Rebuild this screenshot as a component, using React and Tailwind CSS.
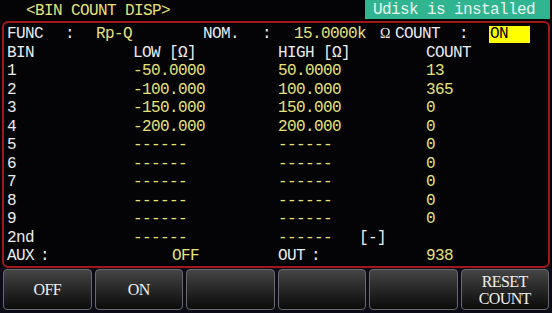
export default function App() {
  const mono = { fontFamily: '"Liberation Mono", "DejaVu Sans Mono", monospace' };
  const Y = "text-[#e6e27a]";
  const W = "text-[#ececec]";
  const rows = [
    ["1", "-50.0000", "50.0000", "13"],
    ["2", "-100.000", "100.000", "365"],
    ["3", "-150.000", "150.000", "0"],
    ["4", "-200.000", "200.000", "0"],
    ["5", "------", "------", "0"],
    ["6", "------", "------", "0"],
    ["7", "------", "------", "0"],
    ["8", "------", "------", "0"],
    ["9", "------", "------", "0"],
  ];
  const Row = ({ children }) => (
    <div className="flex h-[18.5px] items-center whitespace-pre">{children}</div>
  );
  const buttons = ["OFF", "ON", "", "", "", "RESET\nCOUNT"];
  return (
    <div
      className="w-[552px] h-[313px] bg-[#040407] overflow-hidden text-[16px] tracking-[-0.6px] leading-none"
      style={mono}
    >
      {/* header */}
      <div className="flex h-[21px] items-start">
        <div className={`pl-[26px] pt-[3px] ${Y} whitespace-pre`}>{"<BIN COUNT DISP>"}</div>
        <div className="ml-auto mr-[2px] w-[185px] h-[19px] bg-[#31b591] text-[#e8f6f0] flex items-center pl-[8px] whitespace-pre">
          Udisk is installed
        </div>
      </div>
      {/* panel */}
      <div className="mx-[2px] h-[247px] border-2 border-[#a0181c] rounded-[6px] pl-[3px] pt-[2px]">
        <Row>
          <span className={`w-[58px] ${W}`}>FUNC</span>
          <span className={`w-[31px] ${W}`}>:</span>
          <span className={`w-[107px] ${Y}`}>Rp-Q</span>
          <span className={`w-[59px] ${W}`}>NOM.</span>
          <span className={`w-[32px] ${W}`}>:</span>
          <span className={`w-[86px] ${Y}`}>15.0000k</span>
          <span className={`w-[15px] ${W} text-[14px] tracking-normal`} style={{ fontFamily: '"Liberation Serif", serif' }}>Ω</span>
          <span className={`w-[64px] ${W}`}>COUNT</span>
          <span className={`w-[30px] ${W}`}>:</span>
          <span className="w-[41px] h-[17px] bg-[#ffff00] text-black flex items-center pl-[1px]">ON</span>
        </Row>
        <Row>
          <span className={`w-[126px] ${W}`}>BIN</span>
          <span className={`w-[145px] ${W}`}>LOW [Ω]</span>
          <span className={`w-[148px] ${W}`}>HIGH [Ω]</span>
          <span className={W}>COUNT</span>
        </Row>
        {rows.map((r) => (
          <Row key={r[0]}>
            <span className={`w-[126px] ${W}`}>{r[0]}</span>
            <span className={`w-[145px] ${Y}`}>{r[1]}</span>
            <span className={`w-[148px] ${Y}`}>{r[2]}</span>
            <span className={Y}>{r[3]}</span>
          </Row>
        ))}
        <Row>
          <span className={`w-[126px] ${W}`}>2nd</span>
          <span className={`w-[145px] ${Y}`}>------</span>
          <span className={`w-[81px] ${Y}`}>------</span>
          <span className={W}>[-]</span>
        </Row>
        <Row>
          <span className={`w-[33px] ${W}`}>AUX</span>
          <span className={`w-[132px] ${W}`}>:</span>
          <span className={`w-[106px] ${Y}`}>OFF</span>
          <span className={`w-[33px] ${W}`}>OUT</span>
          <span className={`w-[115px] ${W}`}>:</span>
          <span className={Y}>938</span>
        </Row>
      </div>
      {/* buttons */}
      <div className="flex gap-[3px] px-[3px] pt-[1px] h-[45px] bg-[#0b0c18]">
        {buttons.map((b, i) => (
          <div
            key={i}
            className="flex-1 h-[41px] rounded-[4px] border border-[#6a6a6e] bg-gradient-to-b from-[#454545] to-[#0c0c0c] flex items-center justify-center text-center text-[#f0f0f0] whitespace-pre leading-[17px] text-[16px]"
            style={{ fontFamily: '"Liberation Serif", serif' }}
          >
            {b}
          </div>
        ))}
      </div>
    </div>
  );
}
